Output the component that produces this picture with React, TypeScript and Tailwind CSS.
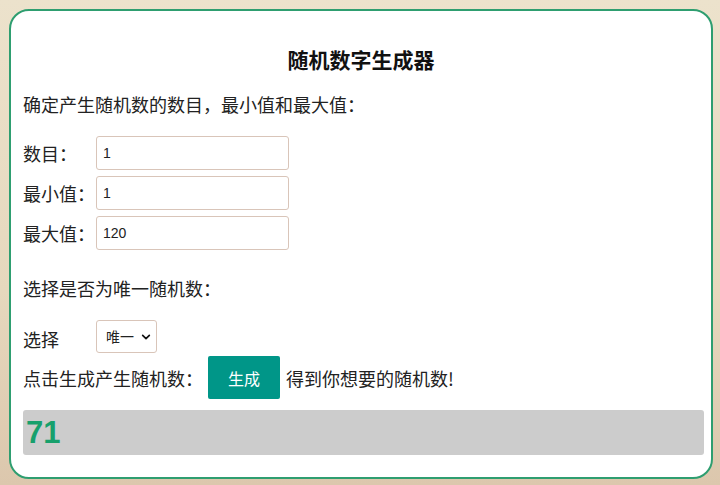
import { useState } from "react";

const cjk = "font-['Noto_Sans_CJK_SC','Liberation_Sans',sans-serif]";

function Field({ label, value }: { label: string; value: string }) {
  return (
    <div className="flex h-[34px] items-center">
      <span className="w-[73px] text-[18px] leading-6">{label}</span>
      <input
        defaultValue={value}
        className="h-[34px] w-[193px] rounded-[3px] border border-[#d9c5b9] bg-white px-[6px] font-['Liberation_Sans',sans-serif] text-[14px] text-[#222] outline-none"
      />
    </div>
  );
}

export default function App() {
  const [result] = useState(71);

  return (
    <div className={`min-h-[485px] w-full bg-[linear-gradient(180deg,#ece2cc_0%,#e6d8bd_60%,#dcc7ad_100%)] pt-[9px] pl-[9px] ${cjk}`}>
      <div className="flex h-[470px] w-[704px] flex-col rounded-[20px] border-2 border-[#2e9e70] bg-white px-[12px] pt-[34px] text-[#222]">
        <h1 className="h-[28px] text-center text-[21px] font-bold leading-7 text-[#111]">随机数字生成器</h1>

        <p className="mt-[19px] text-[18px] leading-6">确定产生随机数的数目，最小值和最大值：</p>

        <div className="mt-[20px] flex flex-col gap-[6px]">
          <Field label="数目：" value="1" />
          <Field label="最小值：" value="1" />
          <Field label="最大值：" value="120" />
        </div>

        <p className="mt-[26px] text-[18px] leading-6">选择是否为唯一随机数：</p>

        <div className="mt-[20px] flex h-[33px] items-center">
          <span className="mt-[4px] w-[73px] text-[18px] leading-6">选择</span>
          <div className="relative">
            <select className="h-[33px] w-[61px] appearance-none rounded-[3px] border border-[#d9c5b9] bg-white pl-[9px] text-[14px] text-[#222] outline-none">
              <option>唯一</option>
              <option>不唯一</option>
            </select>
            <svg
              viewBox="0 0 24 24"
              fill="none"
              stroke="currentColor"
              strokeWidth="4"
              className="pointer-events-none absolute right-[6px] top-[12px] h-[10px] w-[10px] text-[#111]"
              aria-hidden
            >
              <path d="M4 8l8 8 8-8" strokeLinecap="round" strokeLinejoin="round" />
            </svg>
          </div>
        </div>

        <div className="mt-[3px] flex h-[43px] items-center">
          <span className="text-[18px] leading-6">点击生成产生随机数：</span>
          <button className="ml-[5px] h-[43px] w-[72px] rounded-[2px] bg-[#009688] text-[16px] text-white">生成</button>
          <span className="ml-[6px] text-[18px] leading-6">得到你想要的随机数!</span>
        </div>

        <div className="mt-[11px] flex h-[45px] w-[681px] items-center rounded-[3px] bg-[#cccccc] pl-[3px]">
          <span className="font-['Liberation_Sans',sans-serif] text-[31px] font-bold leading-none text-[#17a06c]">{result}</span>
        </div>
      </div>
    </div>
  );
}
